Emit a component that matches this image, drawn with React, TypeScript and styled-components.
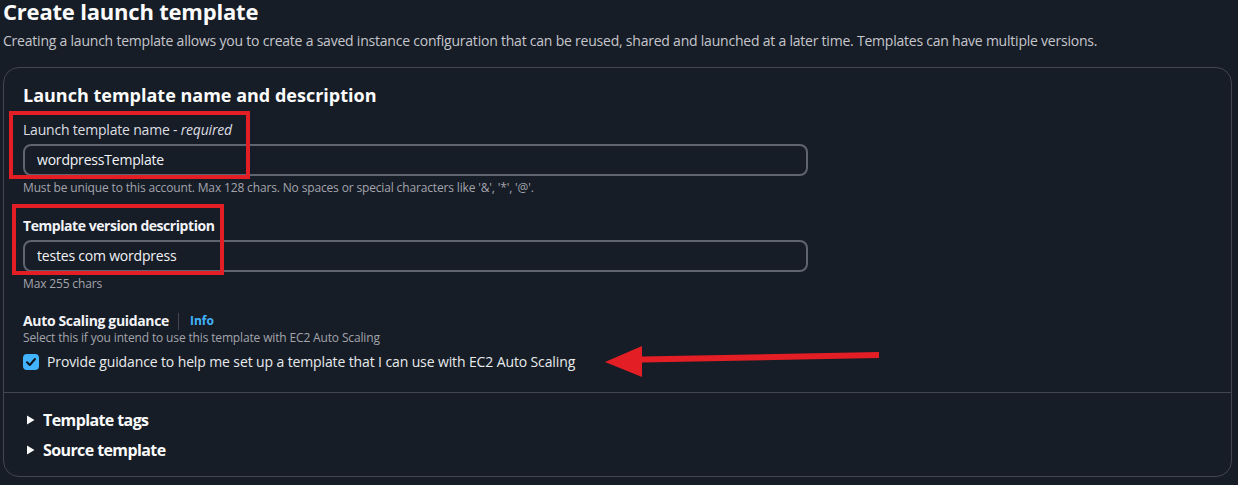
import React from "react";
import styled, { createGlobalStyle } from "styled-components";

const Global = createGlobalStyle`
  html, body { margin: 0; padding: 0; background: #161d26; }
  body { font-family: "Open Sans", "Noto Sans", Arial, sans-serif; color: #e9ebed; }
  * { box-sizing: border-box; }
`;

const Page = styled.div`
  position: relative;
  width: 1238px;
  height: 485px;
  overflow: hidden;
  padding: 0 6px 0 3px;
  background: #161d26;
`;

const Title = styled.h1`
  margin: 0;
  font-size: 22px;
  line-height: 22px;
  font-weight: 700;
  letter-spacing: -0.2px;
  color: #fbfbfb;
`;

const Lead = styled.p`
  margin: 9px 0 0;
  font-size: 14px;
  line-height: 20px;
  letter-spacing: -0.22px;
  color: #c6c6cd;
`;

const Panel = styled.section`
  margin-top: 16px;
  border: 1px solid #424650;
  border-radius: 16px;
  background: #161d26;
`;

const Body = styled.div`
  padding: 16px 19px 20px;
  display: flex;
  flex-direction: column;
`;

const Heading = styled.h2`
  margin: 0;
  font-size: 18px;
  line-height: 22px;
  font-weight: 700;
  color: #fbfbfb;
`;

const Field = styled.div<{ $gap: number }>`
  margin-top: ${(p) => p.$gap}px;
  display: flex;
  flex-direction: column;
`;

const Label = styled.label<{ $bold?: boolean }>`
  font-size: 14px;
  line-height: 20px;
  font-weight: ${(p) => (p.$bold ? 700 : 400)};
  letter-spacing: ${(p) => (p.$bold ? "-0.45px" : "-0.2px")};
  color: ${(p) => (p.$bold ? "#f3f3f7" : "#dedee3")};
  em { font-style: italic; }
`;

const Input = styled.div`
  margin-top: 4px;
  width: 785px;
  height: 32px;
  border: 2px solid #5f6470;
  border-radius: 8px;
  padding: 4px 12px;
  font-size: 14px;
  line-height: 20px;
  letter-spacing: -0.2px;
  color: #f3f3f7;
`;

const Hint = styled.div<{ $top: number }>`
  margin-top: ${(p) => p.$top}px;
  font-size: 12px;
  line-height: 16px;
  letter-spacing: -0.15px;
  color: #a4a4ad;
`;

const LabelRow = styled.div`
  display: flex;
  align-items: center;
  font-size: 14px;
  line-height: 18px;
  font-weight: 700;
  letter-spacing: -0.35px;
  color: #f3f3f7;
`;

const Sep = styled.span`
  width: 1px;
  height: 17px;
  background: #424650;
  margin: 0 11px 0 9px;
`;

const InfoLink = styled.span`
  font-size: 12px;
  font-weight: 700;
  letter-spacing: 0;
  color: #42b4ff;
`;

const CheckRow = styled.div`
  margin-top: 6px;
  display: flex;
  align-items: center;
  gap: 8px;
  font-size: 14px;
  line-height: 20px;
  letter-spacing: -0.12px;
  color: #e9ebed;
`;

const CheckBox = styled.span`
  width: 16px;
  height: 16px;
  border-radius: 4px;
  background: #42b4ff;
  display: flex;
  align-items: center;
  justify-content: center;
`;

const Divider = styled.hr`
  margin: 0;
  border: 0;
  border-top: 1px solid #424650;
`;

const Expanders = styled.div`
  padding: 12px 19px 11px;
`;

const Expander = styled.div`
  display: flex;
  align-items: center;
  gap: 4px;
  height: 30px;
  font-size: 16px;
  line-height: 30px;
  font-weight: 700;
  letter-spacing: -0.6px;
  color: #fbfbfb;
`;

const Caret = styled.svg`
  width: 16px;
  height: 16px;
  flex: none;
`;

const Highlight = styled.div<{ $x: number; $y: number; $w: number; $h: number }>`
  position: absolute;
  left: ${(p) => p.$x}px;
  top: ${(p) => p.$y}px;
  width: ${(p) => p.$w}px;
  height: ${(p) => p.$h}px;
  border: 4px solid #e31e24;
  pointer-events: none;
`;

const ArrowSvg = styled.svg`
  position: absolute;
  left: 600px;
  top: 340px;
  pointer-events: none;
`;

function Expand({ children }: { children: React.ReactNode }) {
  return (
    <Expander>
      <Caret viewBox="0 0 16 16">
        <path d="M4 3.5 L11.5 8 L4 12.5 Z" fill="#fbfbfb" />
      </Caret>
      {children}
    </Expander>
  );
}

export default function App() {
  return (
    <Page>
      <Global />
      <Title>Create launch template</Title>
      <Lead>
        Creating a launch template allows you to create a saved instance configuration that can be reused, shared and
        launched at a later time. Templates can have multiple versions.
      </Lead>
      <Panel>
        <Body>
          <Heading>Launch template name and description</Heading>
          <Field $gap={14}>
            <Label>
              Launch template name - <em>required</em>
            </Label>
            <Input>wordpressTemplate</Input>
            <Hint $top={4}>
              Must be unique to this account. Max 128 chars. No spaces or special characters like '&amp;', '*', '@'.
            </Hint>
          </Field>
          <Field $gap={20}>
            <Label $bold>Template version description</Label>
            <Input>testes com wordpress</Input>
            <Hint $top={4}>Max 255 chars</Hint>
          </Field>
          <Field $gap={20}>
            <LabelRow>
              Auto Scaling guidance
              <Sep />
              <InfoLink>Info</InfoLink>
            </LabelRow>
            <Hint $top={0}>Select this if you intend to use this template with EC2 Auto Scaling</Hint>
            <CheckRow>
              <CheckBox>
                <svg width="12" height="12" viewBox="0 0 12 12">
                  <path d="M2 6.2 L4.8 9 L10 3" fill="none" stroke="#0f141a" strokeWidth="2" strokeLinecap="round" strokeLinejoin="round" />
                </svg>
              </CheckBox>
              Provide guidance to help me set up a template that I can use with EC2 Auto Scaling
            </CheckRow>
          </Field>
        </Body>
        <Divider />
        <Expanders>
          <Expand>Template tags</Expand>
          <Expand>Source template</Expand>
        </Expanders>
      </Panel>
      <Highlight $x={9} $y={111} $w={241} $h={68} />
      <Highlight $x={12} $y={204} $w={212} $h={71} />
      <ArrowSvg width="290" height="45" viewBox="0 0 290 45">
        <path d="M279 12 L42 16.5 L42 22.5 L279 18 Z" fill="#e31e24" />
        <path d="M42 6 L5 22 L42 37 Z" fill="#e31e24" />
      </ArrowSvg>
    </Page>
  );
}
